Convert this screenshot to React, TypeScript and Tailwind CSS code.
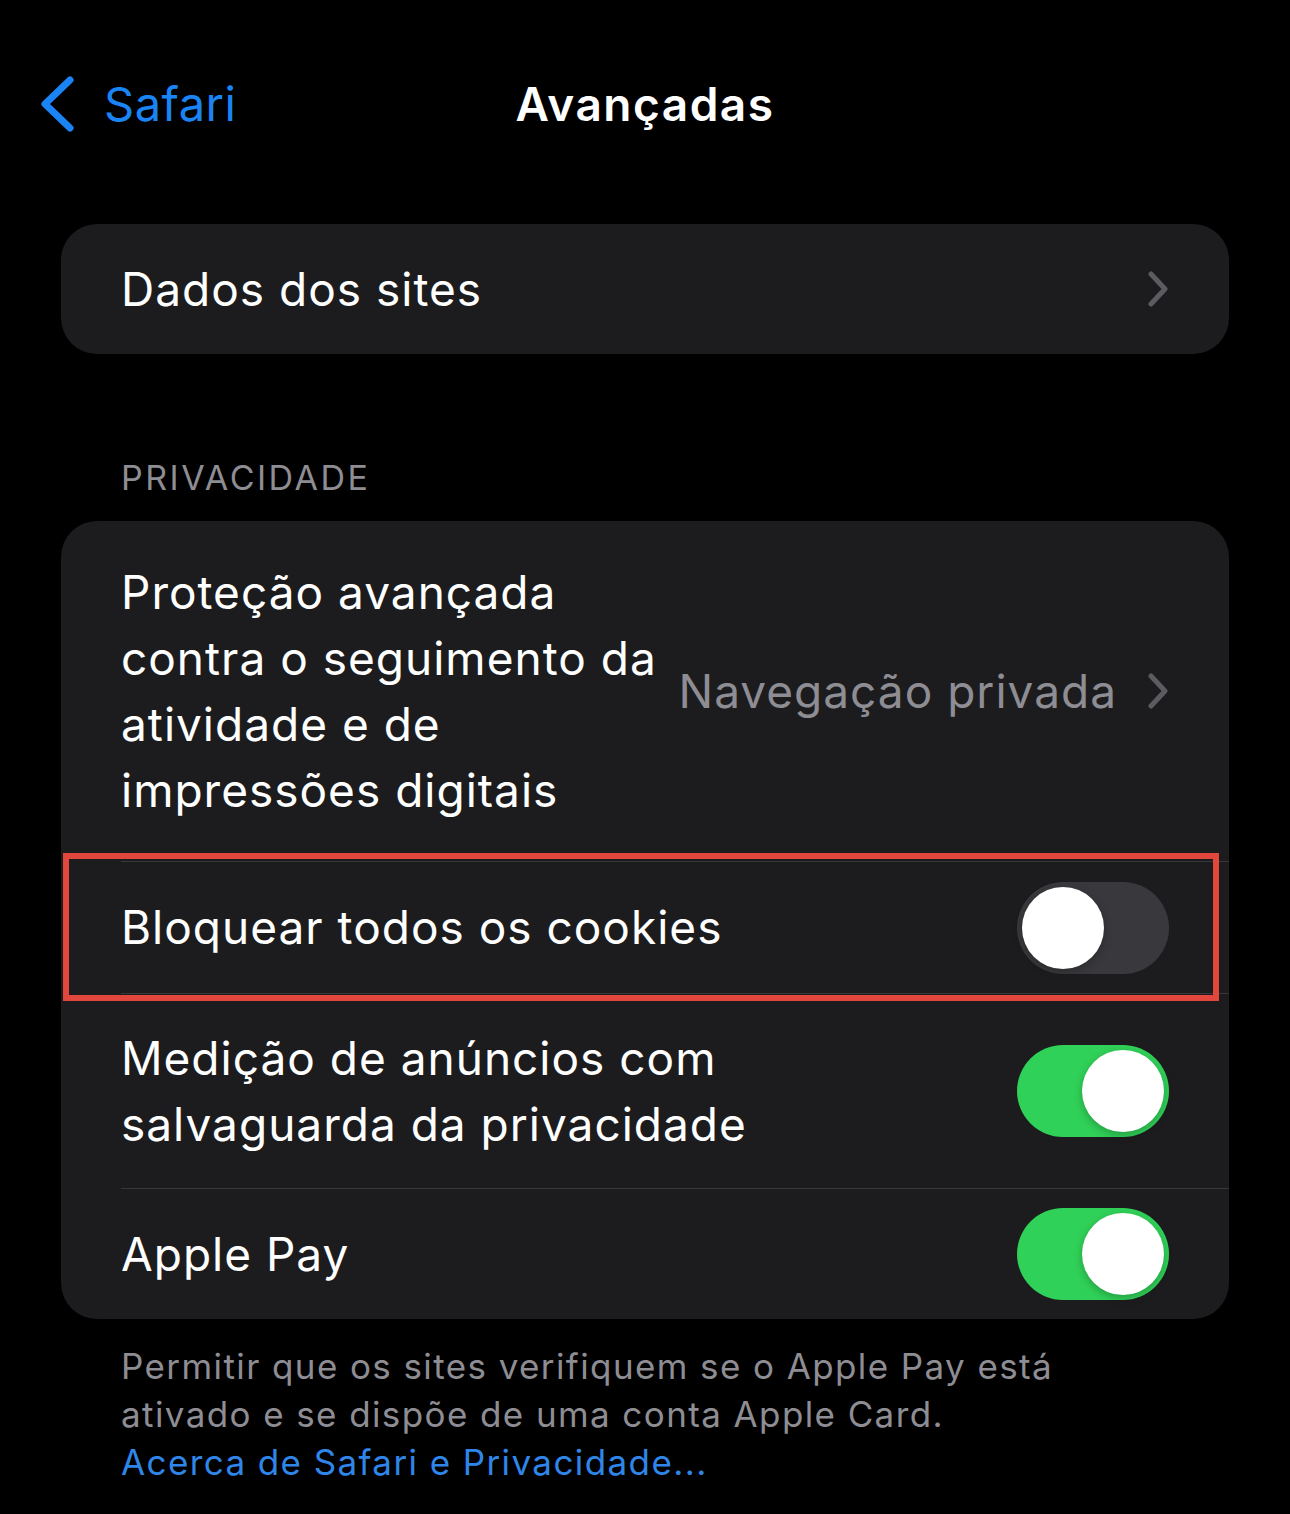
import { FC } from "react";

const Chevron: FC = () => (
  <svg width="22" height="36" viewBox="0 0 22 36" fill="none" className="shrink-0">
    <path d="M4 3 L18 18 L4 33" stroke="#5b5b60" strokeWidth="5" strokeLinecap="round" strokeLinejoin="round" />
  </svg>
);

const Toggle: FC<{ on: boolean }> = ({ on }) => (
  <div
    className={`w-[152px] h-[92px] rounded-full p-[5px] flex shrink-0 ${
      on ? "bg-[#30d158] justify-end" : "bg-[#39393d] justify-start"
    }`}
  >
    <div className="w-[82px] h-[82px] rounded-full bg-white shadow-[0_3px_8px_rgba(0,0,0,0.25)]" />
  </div>
);

const App: FC = () => {
  return (
    <div className="w-[1290px] h-[1514px] bg-black text-white font-['Inter','Liberation_Sans',sans-serif] overflow-hidden">
      {/* NAV BAR */}
      <div className="relative h-[208px] pt-[72px]">
        <div className="flex items-center h-[64px] pl-[40px]">
          <svg width="36" height="56" viewBox="0 0 36 56" fill="none">
            <path d="M30 4 L5 28 L30 52" stroke="#1a84f5" strokeWidth="7" strokeLinecap="round" strokeLinejoin="round" />
          </svg>
          <span className="ml-[28px] text-[47px] text-[#1a84f5] tracking-[0.5px]">Safari</span>
        </div>
        <div className="absolute left-0 right-0 top-[72px] h-[64px] flex items-center justify-center">
          <span className="text-[46px] font-semibold tracking-[1.5px]">Avançadas</span>
        </div>
      </div>

      <div className="px-[61px]">
        {/* SITE DATA */}
        <div className="mt-[16px] h-[130px] rounded-[36px] bg-[#1c1c1e] flex items-center justify-between pl-[60px] pr-[60px]">
          <span className="text-[46px] tracking-[1px]">Dados dos sites</span>
          <Chevron />
        </div>

        {/* PRIVACY */}
        <div className="mt-[102px] pl-[60px] text-[34px] text-[#8d8d93] tracking-[2.5px] leading-[44px]">
          PRIVACIDADE
        </div>

        <div className="mt-[21px] rounded-[36px] bg-[#1c1c1e]">
          <div className="flex items-center justify-between gap-[20px] pl-[60px] pr-[60px] py-[38px]">
            <span className="flex-1 min-w-0 text-[46px] leading-[66px] tracking-[1px]">
              Proteção avançada contra o seguimento da atividade e de impressões digitais
            </span>
            <div className="flex items-center gap-[30px] shrink-0">
              <span className="whitespace-nowrap text-[46px] text-[#8d8d93] tracking-[1px]">Navegação privada</span>
              <Chevron />
            </div>
          </div>

          <div className="ml-[60px] h-[1px] bg-[#38383a]" />

          <div className="relative flex items-center justify-between h-[131px] pl-[60px] pr-[60px]">
            <span className="text-[46px] tracking-[1px]">Bloquear todos os cookies</span>
            <Toggle on={false} />
            <div className="absolute left-[2px] top-[-9px] w-[1156px] h-[148px] border-[6px] border-[#e2473d] pointer-events-none" />
          </div>

          <div className="ml-[60px] h-[1px] bg-[#38383a]" />

          <div className="flex items-center justify-between pl-[60px] pr-[60px] py-[31px]">
            <span className="text-[46px] leading-[66px] tracking-[1px]">
              Medição de anúncios com
              <br />
              salvaguarda da privacidade
            </span>
            <Toggle on={true} />
          </div>

          <div className="ml-[60px] h-[1px] bg-[#38383a]" />

          <div className="flex items-center justify-between h-[130px] pl-[60px] pr-[60px]">
            <span className="text-[46px] tracking-[1px]">Apple Pay</span>
            <Toggle on={true} />
          </div>
        </div>

        {/* FOOTER */}
        <div className="pl-[60px] pt-[23px] text-[35px] leading-[48px] text-[#8d8d93] tracking-[1.4px]">
          <p>Permitir que os sites verifiquem se o Apple Pay está</p>
          <p>ativado e se dispõe de uma conta Apple Card.</p>
          <p className="text-[#2f86e8]">Acerca de Safari e Privacidade...</p>
        </div>
      </div>
    </div>
  );
};

export default App;
